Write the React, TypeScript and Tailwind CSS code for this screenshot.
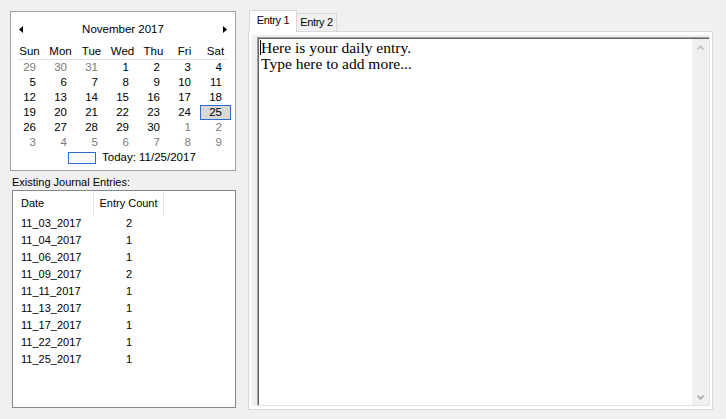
import React from "react";

type Day = { n: number; gray?: boolean };

const weeks: Day[][] = [
  [{ n: 29, gray: true }, { n: 30, gray: true }, { n: 31, gray: true }, { n: 1 }, { n: 2 }, { n: 3 }, { n: 4 }],
  [{ n: 5 }, { n: 6 }, { n: 7 }, { n: 8 }, { n: 9 }, { n: 10 }, { n: 11 }],
  [{ n: 12 }, { n: 13 }, { n: 14 }, { n: 15 }, { n: 16 }, { n: 17 }, { n: 18 }],
  [{ n: 19 }, { n: 20 }, { n: 21 }, { n: 22 }, { n: 23 }, { n: 24 }, { n: 25 }],
  [{ n: 26 }, { n: 27 }, { n: 28 }, { n: 29 }, { n: 30 }, { n: 1, gray: true }, { n: 2, gray: true }],
  [3, 4, 5, 6, 7, 8, 9].map((n) => ({ n, gray: true })),
];

const dayNames = ["Sun", "Mon", "Tue", "Wed", "Thu", "Fri", "Sat"];

const entries: [string, number][] = [
  ["11_03_2017", 2],
  ["11_04_2017", 1],
  ["11_06_2017", 1],
  ["11_09_2017", 2],
  ["11_11_2017", 1],
  ["11_13_2017", 1],
  ["11_17_2017", 1],
  ["11_22_2017", 1],
  ["11_25_2017", 1],
];

function Chevron({ up, color }: { up: boolean; color: string }) {
  return (
    <svg width="7" height="5" viewBox="0 0 7 5">
      <path
        d={up ? "M0.5 4.5 L3.5 1.2 L6.5 4.5" : "M0.5 0.5 L3.5 3.8 L6.5 0.5"}
        fill="none"
        stroke={color}
        strokeWidth="1.6"
      />
    </svg>
  );
}

export default function App() {
  return (
    <div className="w-[726px] h-[419px] bg-[#f0f0f0] flex overflow-hidden font-['Liberation_Sans',Arial,sans-serif] text-black">
      {/* Left column */}
      <div className="ml-[10px] mt-[11px] w-[226px] flex flex-col">
        {/* Calendar */}
        <div className="h-[160px] border border-[#a0a0a0] bg-white flex flex-col text-[11.5px] leading-[15px]">
          <div className="mt-[10px] h-[15px] flex items-center px-[8px]">
            <svg width="4" height="7" viewBox="0 0 4 7">
              <path d="M4 0 L0 3.5 L4 7 Z" fill="#000" />
            </svg>
            <div className="flex-1 text-center">November 2017</div>
            <svg width="4" height="7" viewBox="0 0 4 7">
              <path d="M0 0 L4 3.5 L0 7 Z" fill="#000" />
            </svg>
          </div>
          <div className="mt-[7px] ml-[3px] grid grid-cols-[repeat(7,31px)] h-[15px]">
            {dayNames.map((d) => (
              <div key={d} className="text-center">
                {d}
              </div>
            ))}
          </div>
          <div className="ml-[7px] w-[209px] h-px bg-[#e3e3e3]" />
          <div className="ml-[3px] grid grid-cols-[repeat(7,31px)] auto-rows-[15px]">
            {weeks.flat().map((d, i) => {
              const selected = i === 27;
              return (
                <div
                  key={i}
                  className={
                    selected
                      ? "text-right pr-[8px] border border-[#2a6fcf] bg-[#d9d9d9] leading-[13px]"
                      : d.gray
                      ? "text-right pr-[9px] text-[#7a7a7a]"
                      : "text-right pr-[9px]"
                  }
                >
                  {d.n}
                </div>
              );
            })}
          </div>
          <div className="h-[15px] flex items-center ml-[57px]">
            <div className="w-[28px] h-[12px] border border-[#2a6fcf]" />
            <div className="ml-[6px]">Today: 11/25/2017</div>
          </div>
        </div>

        {/* Label */}
        <div className="h-[19px] pt-[5px] pl-[2px] text-[11px] leading-[13px]">Existing Journal Entries:</div>

        {/* List */}
        <div className="ml-[2px] w-[224px] h-[218px] border border-[#828790] bg-white text-[11px] leading-[13px]">
          <div className="flex h-[24px]">
            <div className="w-[81px] border-r border-[#e5e5e5] pl-[8px] flex items-center mt-[1px]">Date</div>
            <div className="w-[70px] border-r border-[#e5e5e5] flex items-center justify-center mt-[1px]">Entry Count</div>
          </div>
          {entries.map(([d, c]) => (
            <div key={d} className="flex h-[17px] items-center">
              <div className="w-[81px] pl-[8px]">{d}</div>
              <div className="w-[70px] text-center">{c}</div>
            </div>
          ))}
        </div>
      </div>

      {/* Right: tab control */}
      <div className="ml-[12px] mt-[10px] w-[465px] flex flex-col">
        <div className="h-[21px] flex items-end relative z-10 text-[11px] leading-[13px]">
          <div className="ml-[1px] w-[48px] h-[22px] -mb-[1px] bg-white border border-b-0 border-[#d9d9d9] flex justify-center pt-[3px] tracking-[-0.3px]">
            Entry 1
          </div>
          <div className="w-[40px] h-[18px] border-t border-r border-[#d9d9d9] bg-[#f0f0f0] flex justify-center pt-[2px] tracking-[-0.3px]">
            Entry 2
          </div>
        </div>
        <div className="h-[379px] border border-[#d9d9d9] bg-white p-[3px] flex">
          <div className="flex-1 bg-[#f0f0f0] pl-[5px] pt-[2px]">
            <div className="w-[453px] h-[369px] flex border border-t-[#a0a0a0] border-l-[#a0a0a0] border-r-[#e3e3e3] border-b-[#e3e3e3]">
              <div className="flex-1 flex border-t border-l border-[#696969] bg-white">
                <div className="flex-1 relative pl-[2px] pt-[1px] font-['Liberation_Serif','Times_New_Roman',serif] text-[15.5px] leading-[15.5px]">
                  <div className="absolute left-[1px] top-[1px] w-px h-[15px] bg-black" />
                  <div>Here is your daily entry.</div>
                  <div>Type here to add more...</div>
                </div>
                <div className="w-[17px] bg-[#f0f0f0] flex flex-col items-center justify-between pt-[6px] pb-[5px]">
                  <Chevron up color="#bfbfbf" />
                  <Chevron up={false} color="#a6a6a6" />
                </div>
              </div>
            </div>
          </div>
        </div>
      </div>
    </div>
  );
}
